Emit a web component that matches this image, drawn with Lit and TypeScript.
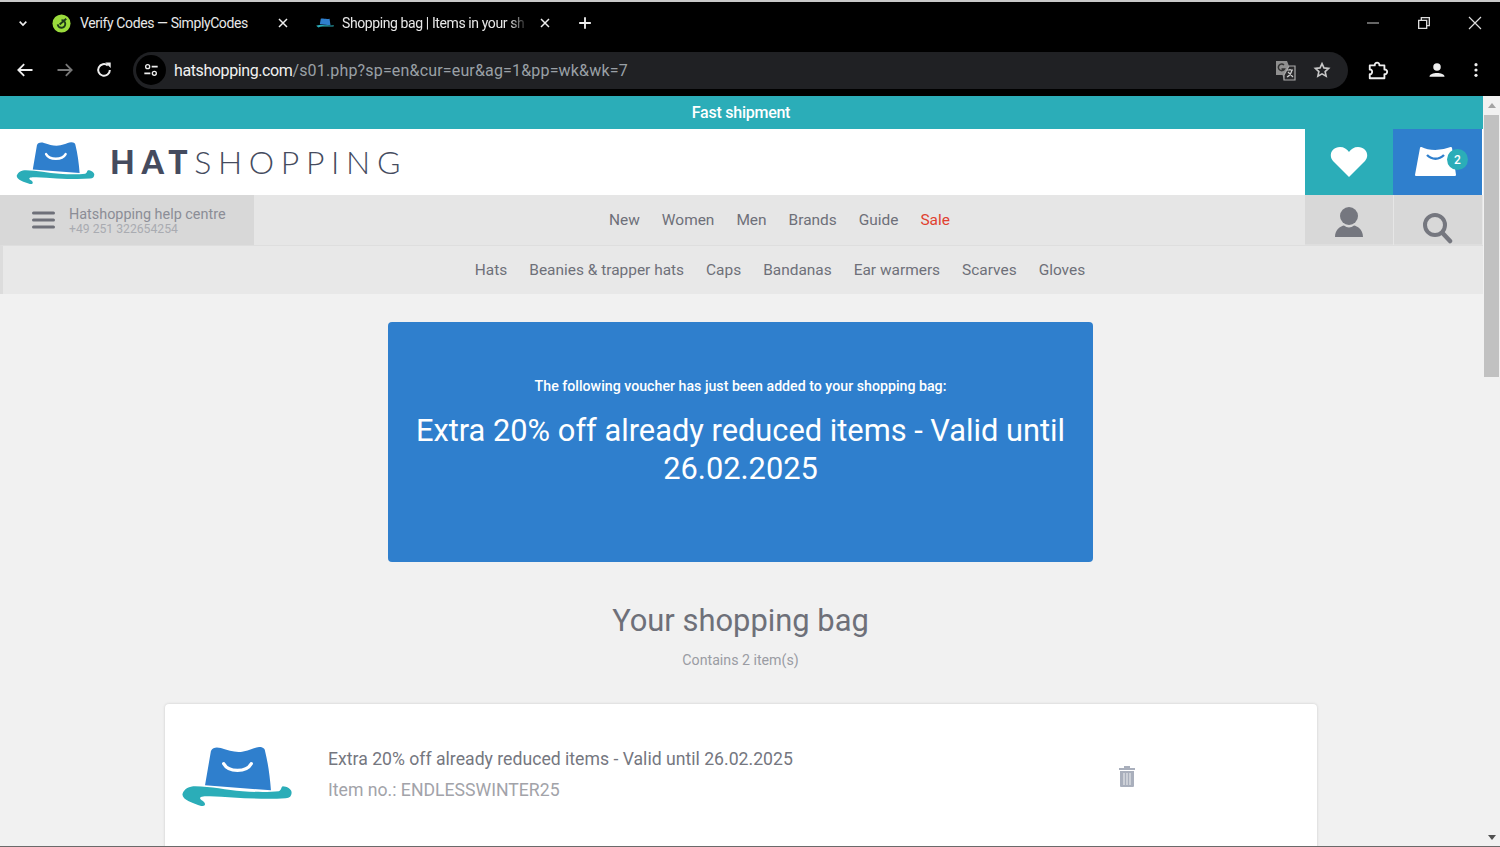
import { LitElement, html, css, svg } from "lit";
import { customElement } from "lit/decorators.js";

const hat = (w: number, h: number) => html`<svg class="hat" width=${w} height=${h} viewBox="0 0 113 61">
  <path d="M30 4 C32 0 36 0 40 1 C47 3 52 5 58 5 C66 5 72 1 79 0 C83 0 85 2 85 4 C88 16 90 30 91 44 L24 39 Z" fill="#2f7fcd"/>
  <path d="M43 17 C48 26 66 26 71 17" fill="none" stroke="#fff" stroke-width="3.4" stroke-linecap="round"/>
  <path d="M1 48 C3 42 8 40 14 40 C30 40 46 44 62 45 C76 46 90 46 99 45 C102 44 101 41 103 40 C107 40 112 43 112 46 C112 50 110 52 106 52 C82 54 54 51 29 50 C24 50 19 50 19 52 C19 54 24 55 24 58 C24 60 22 60 20 60 C12 57 1 54 1 48 Z" fill="#2badb8"/>
</svg>`;

@customElement("app-root")
export class AppRoot extends LitElement {
  static styles = css`
    :host {
      display: block;
      width: 1500px;
      height: 847px;
      overflow: hidden;
      font-family: Roboto, "Liberation Sans", sans-serif;
      background: #f1f1f1;
    }
    .topline { height: 2px; background: #c9c9c9; }
    .chrome { height: 94px; background: #000; color: #e8e8e8; display: flex; flex-direction: column; }
    .tabs { height: 42px; display: flex; align-items: center; font-size: 14px; letter-spacing: -0.4px; flex: none; }
    .tab-menu { width: 46px; display: flex; justify-content: center; }
    .tab { display: flex; align-items: center; white-space: nowrap; box-sizing: border-box; flex: none; }
    .tab.one { width: 245px; padding-left: 6px; gap: 9px; }
    .tab.two { width: 262px; padding-left: 25px; gap: 8px; }
    .tab .label { flex: none; width: 186px; }
    .tab.two .label { -webkit-mask-image: linear-gradient(to right, #000 90%, transparent); mask-image: linear-gradient(to right, #000 90%, transparent); }
    .tab.two svg.close { margin-left: 1px; }
    .tab svg { flex: none; }
    .plus { margin-left: 22px; display: flex; }
    .win { margin-left: auto; display: flex; align-items: center; gap: 35px; padding-right: 17px; }
    .toolbar { height: 52px; display: flex; align-items: center; box-sizing: border-box; flex: none; }
    .nav-btns { width: 133px; padding-left: 15px; box-sizing: border-box; display: flex; gap: 19.5px; }
    .omnibox { width: 1215px; height: 37px; border-radius: 19px; background: #202124; display: flex; align-items: center; font-size: 16px; }
    .site { width: 30px; height: 30px; border-radius: 50%; background: #000; margin: 0 8px 0 3px; display: flex; align-items: center; justify-content: center; flex: none; }
    .url { color: #9aa0a6; letter-spacing: 0.17px; }
    .url b { color: #f1f1f1; font-weight: 400; letter-spacing: -0.4px; }
    .omni-end { margin-left: auto; display: flex; align-items: center; gap: 17px; padding-right: 17px; }
    .tools { flex: 1; display: flex; align-items: center; padding-left: 19px; }
    .tools span { display: flex; }
    .tools .user { margin-left: 39px; }
    .tools .dots { margin-left: 22px; }
    .viewport { display: flex; height: 751px; }
    .page { width: 1483px; flex: none; }
    .scroll { width: 17px; background: #f1f1f1; display: flex; flex-direction: column; align-items: center; }
    .arrow { width: 0; height: 0; border-left: 4px solid transparent; border-right: 4px solid transparent; }
    .arrow.up { border-bottom: 5px solid #a3a3a3; margin-top: 7px; }
    .arrow.down { border-top: 5px solid #505050; margin-top: auto; margin-bottom: 7px; }
    .thumb { width: 15px; height: 262px; background: #c1c1c1; margin-top: 7px; }
    .promo { height: 33px; background: #2badb8; color: #fff; font-size: 16px; font-weight: 500; text-align: center; line-height: 33px; letter-spacing: -0.25px; padding-right: 1px; }
    .head { height: 66px; display: flex; background: #fff; }
    .logo { flex: 1; display: flex; align-items: center; padding-left: 16px; gap: 15px; }
    .logo .hat { margin-top: 3px; }
    .word { font-size: 32px; color: #454b5e; letter-spacing: 6.65px; font-family: Lato, "Open Sans", sans-serif; font-weight: 300; line-height: 1; }
    .word b { font-weight: 900; }
    .square { width: 88px; display: flex; align-items: center; justify-content: center; position: relative; }
    .square.teal { background: #2badb8; }
    .square.blue { background: #2f7fcd; width: 89px; margin-right: 1px; }
    .bag { margin-right: 3px; }
    .badge { position: absolute; left: 54px; top: 20px; width: 21px; height: 21px; border-radius: 50%; background: #2badb8; color: #fff; font-size: 12px; font-weight: 500; display: flex; align-items: center; justify-content: center; }
    .nav { height: 50px; display: flex; background: #e6e6e6; }
    .help { width: 254px; background: #d8d8d8; display: flex; align-items: center; padding-left: 32px; box-sizing: border-box; gap: 14px; flex: none; }
    .help-text { color: #8b8d96; font-size: 14.4px; line-height: 15px; margin-top: 3px; white-space: nowrap; }
    .help-text small { display: block; font-size: 12.2px; line-height: 15px; color: #a9abb1; }
    .links { display: flex; gap: 22px; font-size: 15.45px; color: #6e7079; align-items: center; }
    .nav .links { flex: 1; justify-content: center; }
    .sale { color: #e0412f; }
    .cell { width: 88px; background: #d8d8d8; display: flex; justify-content: center; padding-top: 12px; box-sizing: border-box; border-bottom: 1px solid #dedede; flex: none; }
    .cell + .cell { margin-left: 1px; margin-right: 1px; }
    .cell .search { margin-top: 5px; }
    .sub { height: 49px; background: #e8e8e8; justify-content: center; border-left: 3px solid #dcdcdc; box-sizing: border-box; padding-left: 74px; border-top: 1px solid #dedede; }
    .content { display: flex; flex-direction: column; align-items: center; padding: 28px 2px 0 0; }
    .voucher { width: 705px; height: 240px; box-sizing: border-box; background: #2f7fcd; border-radius: 4px; color: #fff; text-align: center; padding: 54px 20px 0; }
    .voucher p { margin: 0; font-size: 14.2px; line-height: 20px; font-weight: 500; }
    .voucher h2 { margin: 16px 0 0; font-size: 30.8px; line-height: 38px; font-weight: 400; }
    .title { margin: 39px 0 0; font-size: 30.9px; line-height: 40px; font-weight: 400; color: #6e7079; }
    .count { margin: 9px 0 0; font-size: 14.2px; line-height: 20px; color: #9a9ca3; }
    .card { width: 1152px; height: 160px; margin: 34px 0 0 1px; background: #fff; border-radius: 4px 4px 0 0; box-shadow: 0 0 3px rgba(0, 0, 0, 0.16); display: flex; align-items: flex-start; padding: 40px 0 0 16px; box-sizing: border-box; }
    .card .hat { margin-top: 3px; }
    .info { margin-left: 35px; width: 790px; }
    .info div { font-size: 17.65px; line-height: 30px; color: #75777f; white-space: nowrap; }
    .info div + div { color: #a2a3a9; margin-top: 1px; }
    .trash { margin-top: 21px; }
    .bottomline { position: absolute; left: 0; top: 846px; width: 1500px; height: 1px; background: #6a6a6a; }
  `;

  private icon(content: unknown, size = 20, box = 24) {
    return html`<svg width=${size} height=${size} viewBox="0 0 ${box} ${box}">${content}</svg>`;
  }

  render() {
    return html`
      <div class="topline"></div>
      <div class="chrome">
        <div class="tabs">
          <div class="tab-menu">${this.icon(svg`<path d="M7 10 L12 15 L17 10" stroke="#eee" stroke-width="2.4" fill="none"/>`, 16)}</div>
          <div class="tab one">
            <svg width="19" height="19" viewBox="0 0 20 20">
              <circle cx="10" cy="10" r="9.5" fill="#9bdc3c"/>
              <path d="M6 11 A4 4 0 1 0 10 6.5 M8 11 L15 5" stroke="#1d3a1a" stroke-width="2" fill="none"/>
            </svg>
            <span class="label">Verify Codes — SimplyCodes</span>
            ${this.icon(svg`<path d="M6 6 L18 18 M18 6 L6 18" stroke="#eee" stroke-width="2.2" fill="none"/>`, 16)}
          </div>
          <div class="tab two">
            <svg width="18" height="14" viewBox="0 0 113 61">
              <path d="M30 4 C40 0 60 8 85 4 L91 44 L24 39 Z" fill="#2f7fcd"/>
              <path d="M1 48 C20 36 70 50 112 44 L110 52 C70 54 40 50 15 58 Z" fill="#2badb8"/>
            </svg>
            <span class="label">Shopping bag | Items in your sh</span>
            <svg class="close" width="16" height="16" viewBox="0 0 24 24"><path d="M6 6 L18 18 M18 6 L6 18" stroke="#eee" stroke-width="2.2" fill="none"/></svg>
          </div>
          <div class="plus">${this.icon(svg`<path d="M12 5 V19 M5 12 H19" stroke="#eee" stroke-width="2.2" fill="none"/>`, 20)}</div>
          <div class="win">
            ${this.icon(svg`<path d="M3 12 H21" stroke="#999" stroke-width="2" fill="none"/>`, 16)}
            ${this.icon(svg`<path d="M4 8 H16 V20 H4 Z M8 8 V4 H20 V16 H16" stroke="#ddd" stroke-width="2" fill="none"/>`, 16)}
            ${this.icon(svg`<path d="M3 3 L21 21 M21 3 L3 21" stroke="#ddd" stroke-width="1.8" fill="none"/>`, 16)}
          </div>
        </div>
        <div class="toolbar">
          <div class="nav-btns">
            ${this.icon(svg`<path d="M21 12 H4 M11 5 L4 12 L11 19" stroke="#eee" stroke-width="2.2" fill="none"/>`)}
            ${this.icon(svg`<path d="M3 12 H20 M13 5 L20 12 L13 19" stroke="#777" stroke-width="2.2" fill="none"/>`)}
            ${this.icon(svg`<path d="M19 12 A7 7 0 1 1 16.5 6.6" stroke="#eee" stroke-width="2.4" fill="none"/><path d="M13.5 3 H20 V9.5 Z" fill="#eee"/>`)}
          </div>
          <div class="omnibox">
            <div class="site">
              ${this.icon(svg`<circle cx="7" cy="7" r="3" stroke="#eee" stroke-width="2" fill="none"/><path d="M13 7 H22 M2 17 H11" stroke="#eee" stroke-width="2.4"/><circle cx="17" cy="17" r="3" stroke="#eee" stroke-width="2" fill="none"/>`, 16)}
            </div>
            <span class="url"><b>hatshopping.com</b>/s01.php?sp=en&amp;cur=eur&amp;ag=1&amp;pp=wk&amp;wk=7</span>
            <div class="omni-end">
              <svg width="21" height="21" viewBox="0 0 21 21">
                <path d="M1 1 H12 L14 6 H20 V20 H9 L7.5 15 H1 Z" fill="#8f8f8f"/>
                <path d="M9 15 L14 6 H20 V20 H9 Z" fill="#2a2a2c" stroke="#aaa" stroke-width="1.2"/>
                <path d="M9 5 A3.3 3.3 0 1 0 9.5 9 H6.5" stroke="#333" stroke-width="1.5" fill="none"/>
                <path d="M12 10 H18 M15 9 V10 M17 10 C16 14 14 16 12 17 M13 12 L18 17" stroke="#ccc" stroke-width="1.2" fill="none"/>
              </svg>
              ${this.icon(svg`<path d="M12 3.5 L14.6 9.2 L20.8 9.9 L16.2 14.1 L17.5 20.2 L12 17.1 L6.5 20.2 L7.8 14.1 L3.2 9.9 L9.4 9.2 Z" stroke="#c8c8c8" stroke-width="2.2" fill="none"/>`, 18)}
            </div>
          </div>
          <div class="tools">
            ${this.icon(svg`<path d="M3 7 H8.5 C8 3 14 3 13.5 7 H19 V11.5 C23 11 23 17 19 16.5 V21 H3 V16.5 C6.5 17 6.5 11 3 11.5 Z" stroke="#eee" stroke-width="2" fill="none" stroke-linejoin="round"/>`, 22)}
            <span class="user">${this.icon(svg`<circle cx="12" cy="8" r="5" fill="#eee"/><path d="M2 21 C2 14.5 22 14.5 22 21 Z" fill="#eee"/>`, 18)}</span>
            <span class="dots">${this.icon(svg`<circle cx="12" cy="4" r="2.4" fill="#eee"/><circle cx="12" cy="12" r="2.4" fill="#eee"/><circle cx="12" cy="20" r="2.4" fill="#eee"/>`, 16)}</span>
          </div>
        </div>
      </div>
      <div class="viewport">
        <div class="page">
          <div class="promo">Fast shipment</div>
          <div class="head">
            <div class="logo">
              ${hat(79, 43)}
              <span class="word"><b>HAT</b>SHOPPING</span>
            </div>
            <div class="square teal">
              <svg width="38" height="32" viewBox="0 0 38 32"><path d="M19 31 L3 15 C-2 9 2 1 10 1 C14 1 17 3 19 6 C21 3 24 1 28 1 C36 1 40 9 35 15 Z" fill="#fff"/></svg>
            </div>
            <div class="square blue">
              <svg class="bag" width="42" height="32" viewBox="0 0 42 32">
                <path d="M6 2 C14 6 26 6 36 2 L40 29 H1 Z" fill="#fff" stroke="#fff" stroke-width="2" stroke-linejoin="round"/>
                <path d="M12 9 C17 14 24 14 29 9" stroke="#2f7fcd" stroke-width="2.4" fill="none"/>
              </svg>
              <span class="badge">2</span>
            </div>
          </div>
          <div class="nav">
            <div class="help">
              <svg width="23" height="18" viewBox="0 0 23 18"><path d="M1.5 2 H21.5 M1.5 9 H21.5 M1.5 16 H21.5" stroke="#6e7079" stroke-width="3" stroke-linecap="round"/></svg>
              <div class="help-text">Hatshopping help centre<small>+49 251 322654254</small></div>
            </div>
            <div class="links">
              <span>New</span><span>Women</span><span>Men</span><span>Brands</span><span>Guide</span><span class="sale">Sale</span>
            </div>
            <div class="cell">
              <svg width="30" height="30" viewBox="0 0 30 30"><circle cx="15" cy="9" r="9" fill="#75777f"/><path d="M1 30 C1 22 7 19 10 18.5 C13 21 17 21 20 18.5 C23 19 29 22 29 30 Z" fill="#75777f"/></svg>
            </div>
            <div class="cell">
              <svg class="search" width="30" height="32" viewBox="0 0 30 32"><circle cx="12" cy="13" r="10" stroke="#75777f" stroke-width="4" fill="none"/><path d="M19.5 21 L27 29" stroke="#75777f" stroke-width="4.5" stroke-linecap="round"/></svg>
            </div>
          </div>
          <div class="links sub">
            <span>Hats</span><span>Beanies &amp; trapper hats</span><span>Caps</span><span>Bandanas</span><span>Ear warmers</span><span>Scarves</span><span>Gloves</span>
          </div>
          <div class="content">
            <div class="voucher">
              <p>The following voucher has just been added to your shopping bag:</p>
              <h2>Extra 20% off already reduced items - Valid until 26.02.2025</h2>
            </div>
            <h1 class="title">Your shopping bag</h1>
            <div class="count">Contains 2 item(s)</div>
            <div class="card">
              ${hat(112, 60)}
              <div class="info">
                <div>Extra 20% off already reduced items - Valid until 26.02.2025</div>
                <div>Item no.: ENDLESSWINTER25</div>
              </div>
              <svg class="trash" width="18" height="22" viewBox="0 0 18 22">
                <path d="M1 3 H6 V1 H12 V3 H17 V5 H1 Z M2 6 H16 V21 Q16 22 15 22 H3 Q2 22 2 21 Z" fill="#a9afbc"/>
                <path d="M6 8 V20 M9 8 V20 M12 8 V20" stroke="#e4e6ea" stroke-width="1.2"/>
              </svg>
            </div>
          </div>
        </div>
        <div class="scroll">
          <div class="arrow up"></div>
          <div class="thumb"></div>
          <div class="arrow down"></div>
        </div>
      </div>
      <div class="bottomline"></div>
    `;
  }
}
